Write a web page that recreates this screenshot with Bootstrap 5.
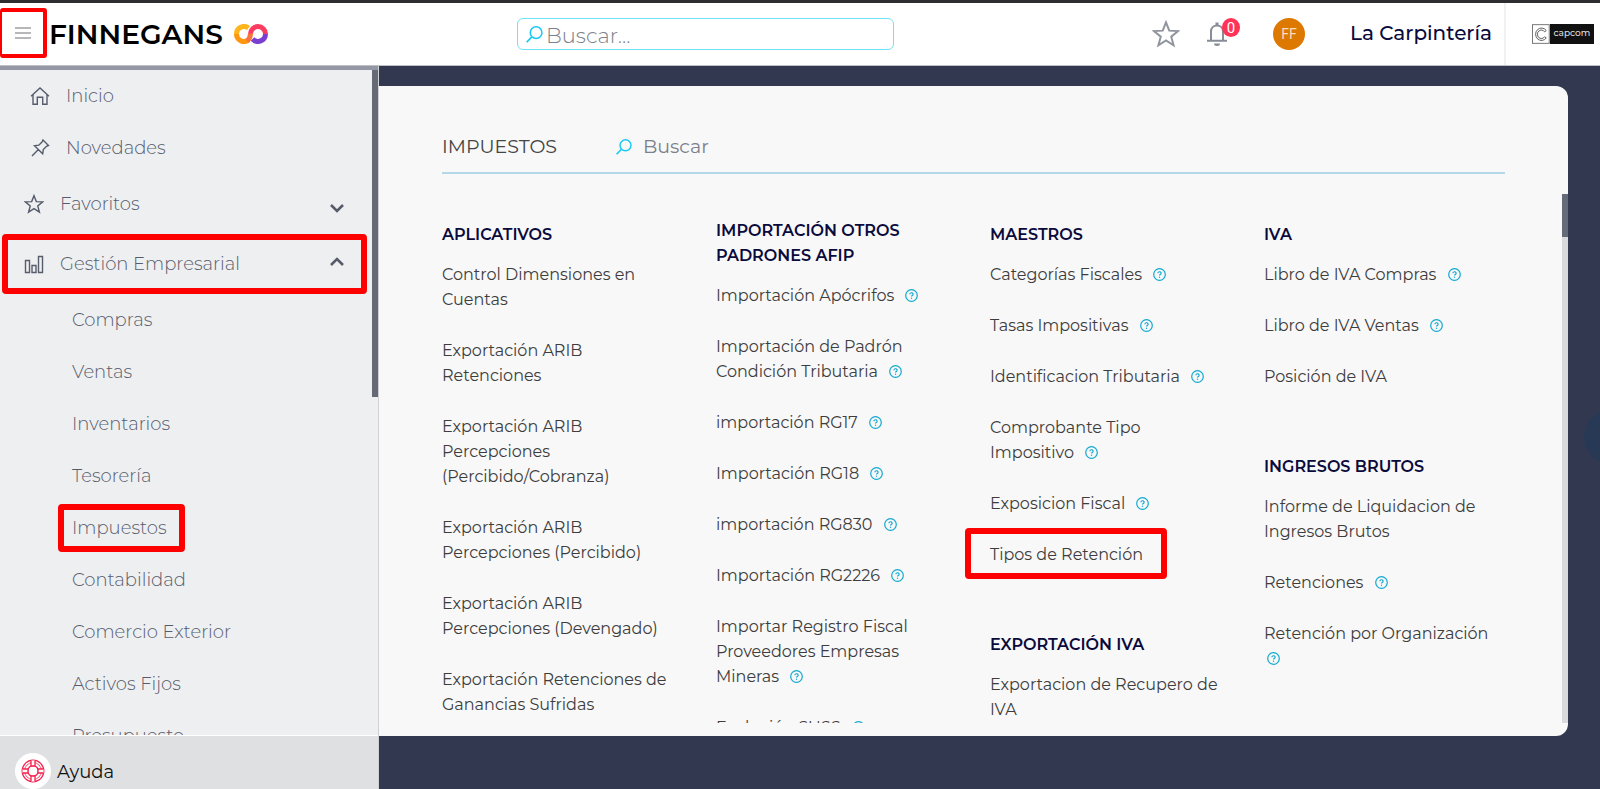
<!DOCTYPE html>
<html lang="es">
<head>
<meta charset="utf-8">
<meta name="viewport" content="width=device-width, initial-scale=1">
<title>Finnegans - Impuestos</title>
<link href="https://cdn.jsdelivr.net/npm/bootstrap@5.3.0/dist/css/bootstrap.min.css" rel="stylesheet">
<style>
  :root { --navy:#313850; --ink:#0a0a3c; --slate:#565c6c; --cyan:#14c8f5; --mark:#ff0000; }
  body { font-family: Montserrat, Inter, "Liberation Sans", sans-serif; background: var(--navy); color:#3d3d3d; }
  a { color: inherit; text-decoration: none; }
  .topbar { height: 66px; border-top: 3px solid #2e2e31; border-bottom: 1px solid #bfc0c6; background:#fff; }
  .burger { width: 47px; height: 50px; margin-top: 5px; border: 4px solid var(--mark); border-left-width: 2px; border-radius: 3px; background:none; padding: 0 0 0 13px; }
  .wordmark { font-size: 28px; font-weight: 600; line-height: 32px; color:#000; margin-left: 2px; width: 185px; }
  .search { width: 377px; height: 32px; margin-left: 249px; border: 1px solid #6fe3fa; border-radius: 6px; padding-left: 8px; }
  .search input, .finder input { border: 0; outline: 0; background: none; padding: 0; }
  .search input { font-size: 21px; font-weight: 300; line-height: 30px; padding-top: 3px; margin-left: 3px; width: 320px; }
  input::placeholder { color:#7c808b; opacity: 1; }
  .icon-btn { border: 0; background: none; padding: 0; line-height: 0; }
  .star-btn { color:#90949d; }
  .bell { margin: 0 12px 0 26px; }
  .count { position: absolute; left: 16px; top: -3px; width: 18px; height: 19px; border-radius: 50%; background:#ff3257; color:#fff; font-family: Roboto, sans-serif; font-size: 15px; line-height: 20px; text-align: center; }
  .avatar { width: 32px; height: 32px; border-radius: 50%; background:#dd7900; color:#f8dfc0; font-family: Roboto, sans-serif; font-size: 14px; line-height: 32px; text-align: center; margin-left: 31px; }
  .company { font-size: 20px; font-weight: 500; line-height: 28px; color: var(--ink); width: 154px; margin-left: 45px; padding-bottom: 2px; }
  .tenant { height: 62px; width: 96px; border-left: 2px solid #f1f1f4; padding: 0 6px 0 26px; }
  .tenant-name { background:#111; color:#ddd; font-size: 9px; font-weight: 500; line-height: 17px; height: 20px; width: 45px; text-align: center; }

  .shell { height: calc(100vh - 66px); min-height: 400px; }
  .side { width: 379px; background:#eeeff1; color: var(--slate); border-right: 1px solid #cfd1d5; font-size: 18px; font-weight: 300; }
  .side-scroll { border-top: 4px solid #9398a4; overflow: hidden; }
  .side-thumb { position: absolute; right: 0; top: 0; width: 6px; height: 327px; background:#656a76; }
  .side-row { height: 52px; display: flex; align-items: center; }
  .side-row.lead-row { padding-left: 30px; gap: 16px; }
  .side-row.group-row { padding: 0 34px 0 24px; gap: 16px; width: 100%; height: 60px; border: 0; background:none; color:inherit; text-align: left; font-weight: inherit; }
  .side-sub { padding-left: 72px; }
  .marked { position: relative; }
  .marked::after { content:""; position: absolute; border: 6px solid var(--mark); border-radius: 4px; pointer-events: none; }
  .mark-group::after { left: 2px; right: 11px; top: 0; bottom: 0; }
  .mark-sub::after { left: -14px; width: 127px; top: -11px; bottom: -10px; }
  .mark-item::after { left: -25px; width: 202px; top: -14px; bottom: -12px; }
  .helpbar { height: 54px; background:#dfe0e2; border-top: 1px solid #fff; padding-left: 15px; color:#111; font-weight: 400; }
  .help-disc { width: 36px; height: 36px; border-radius: 50%; background:#fff; margin-right: 6px; }
  .help-text { padding-bottom: 3px; }

  .panel { margin: 20px 32px 53px 0; background:#f8f8f8; border-radius: 0 12px 12px 0; overflow: hidden; }
  .panel-title { margin: 40px 63px 0; padding-bottom: 4px; height: 48px; border-bottom: 2px solid #b3d8e8; }
  .panel-title h1 { font-size: 19px; line-height: 24px; font-weight: 400; width: 174px; color:#444; }
  .finder input { font-size: 19px; line-height: 24px; margin-left: 11px; }
  .menu { margin: 20px 0 13px; padding: 24px 30px 0 63px; overflow: hidden; font-size: 16px; line-height: 25px; }
  .menu h2 { font-size: 16px; line-height: 25px; font-weight: 600; color: var(--ink); margin: 0; padding: 4px 0 15px; }
  .menu h2.tall { padding-top: 0; }
  .menu ul { list-style: none; margin: 0; padding: 0; }
  .menu li { margin-bottom: 26px; white-space: nowrap; }
  .menu section + section { padding-top: 35px; }
  .menu section:not(:last-child) { display: flow-root; }
  .tip { width: 13px; height: 13px; margin-left: 7px; vertical-align: -1px; }
  .tip.below { margin-left: 3px; }
  .track { position: absolute; right: 0; top: 108px; bottom: 13px; width: 6px; background:#d7d9dd; }
  .track::before { content:""; display: block; height: 43px; background:#656a78; }
  .bubble { position: absolute; right: -38px; top: 344px; width: 54px; height: 54px; border-radius: 50%; background:#283955; }
</style>
<script src="https://cdn.jsdelivr.net/npm/bootstrap@5.3.0/dist/js/bootstrap.bundle.min.js"></script>
</head>
<body class="overflow-hidden">
<svg class="d-none" xmlns="http://www.w3.org/2000/svg">
  <symbol id="q" viewBox="0 0 13 13"><circle cx="6.500" cy="6.500" r="5.800" fill="none" stroke="#14a9d0" stroke-width="1.200"/><path d="M4.900 5.300a1.600 1.500 0 1 1 2.300 1.300c-.5.300-.7.500-.7 1" fill="none" stroke="#14a9d0" stroke-width="1.200"/><circle cx="6.500" cy="9.200" r=".7" fill="#14a9d0"/></symbol>
  <symbol id="lens" viewBox="0 0 16 16"><circle cx="9.500" cy="6.300" r="5.500" fill="none" stroke="#14c8f5" stroke-width="1.400"/><path d="M5.500 10.300L.6 15.300" stroke="#14c8f5" stroke-width="1.600"/></symbol>
  <symbol id="star" viewBox="0 0 24 24"><path d="M12 2l2.800 7.100 7.600.4-5.900 4.800 2 7.400L12 17.500l-6.500 4.200 2-7.400-5.900-4.800 7.600-.4z" fill="none" stroke="currentColor" stroke-width="1.700"/></symbol>
</svg>

<header class="topbar d-flex align-items-center">
  <button class="burger align-self-start d-flex align-items-center" aria-label="Menú">
    <svg width="16" height="14" viewBox="0 0 16 14"><path d="M0 2h16M0 7h16M0 12h16" stroke="#a0a0a3" stroke-width="1.500"/></svg>
  </button>
  <a href="#" class="d-flex align-items-center">
    <span class="wordmark">FINNEGANS</span>
    <svg width="34" height="20" viewBox="0 0 34 20" fill="none" stroke-width="5">
      <path d="M2.500 10A7.500 7.500 0 0 1 14.500 4" stroke="#ffb51c"/>
      <path d="M2.500 10A7.500 7.500 0 0 0 14.500 16" stroke="#ff960f"/>
      <path d="M31.500 10A7.500 7.500 0 0 1 18.500 15" stroke="#7a3fd0"/>
      <path d="M16.500 10A7.500 7.500 0 0 1 31.500 10" stroke="#fb3b60"/>
      <path d="M13 17Q16.500 14 16.500 9.500" stroke="#fa7440"/>
    </svg>
  </a>
  <form class="search d-flex align-items-center" role="search">
    <svg width="17" height="17"><use href="#lens"/></svg>
    <input type="search" placeholder="Buscar..." aria-label="Buscar en el sistema">
  </form>
  <div class="d-flex align-items-center ms-auto">
    <button class="icon-btn star-btn" aria-label="Favoritos"><svg width="28" height="28"><use href="#star"/></svg></button>
    <button class="icon-btn position-relative bell" aria-label="Notificaciones">
      <svg width="24" height="26" viewBox="0 0 24 26"><path d="M5 19v-8.500C5 6.500 8 4.500 11 4.500s6 2 6 6V19M1 19.800h20" fill="none" stroke="#878c96" stroke-width="2"/><path d="M11 1.500v3" stroke="#878c96" stroke-width="3"/><path d="M8 22.500h6a3 2.500 0 0 1-6 0z" fill="#878c96"/></svg>
      <span class="count">0</span>
    </button>
    <span class="avatar">FF</span>
    <span class="company text-nowrap">La Carpintería</span>
    <div class="tenant d-flex align-items-center">
      <svg width="18" height="20" viewBox="0 0 18 20"><rect x=".5" y=".5" width="17" height="19" fill="#fff" stroke="#777"/><path d="M14.500 6.500A6 6.300 0 1 0 14.500 14L12.800 12.800A4 4.300 0 1 1 12.800 7.800z" fill="#fff" stroke="#333" stroke-width=".8"/></svg>
      <span class="tenant-name">capcom</span>
    </div>
  </div>
</header>

<div class="shell d-flex position-relative overflow-hidden">
  <aside class="side d-flex flex-column flex-shrink-0">
    <nav class="side-scroll flex-grow-1 position-relative" aria-label="Principal">
      <a href="#" class="side-row lead-row">
        <svg width="20" height="20" viewBox="0 0 20 20" fill="none" stroke="currentColor" stroke-width="1.400"><path d="M1 10.300L10 2l9 8.300M3 9v9.300h4.300v-7h5.400v7H17V9"/></svg>Inicio</a>
      <a href="#" class="side-row lead-row">
        <svg width="20" height="20" viewBox="0 0 20 20" fill="none" stroke="currentColor" stroke-width="1.400"><path d="M13 2l5.500 5.500-2 .8-3.200 3.200-.6 4.200L4.500 7.800l4.300-.6 3.200-3.200zM8.200 11.800L2 18"/></svg>Novedades</a>
      <button class="side-row group-row">
        <svg width="20" height="20"><use href="#star"/></svg><span class="flex-grow-1">Favoritos</span>
        <svg class="mt-2" width="14" height="10" viewBox="0 0 14 10"><path d="M1 2l6 6 6-6" fill="none" stroke="#555b69" stroke-width="2.600"/></svg></button>
      <button class="side-row group-row marked mark-group">
        <svg width="20" height="20" viewBox="0 0 20 20" fill="none" stroke="currentColor" stroke-width="1.400"><path d="M1.500 6.500h4v12h-4zM8 11.500h4v7H8zM14.500 2.500h4v16h-4z"/></svg><span class="flex-grow-1">Gestión Empresarial</span>
        <svg class="mb-1" width="14" height="10" viewBox="0 0 14 10"><path d="M1 8l6-6 6 6" fill="none" stroke="#555b69" stroke-width="2.600"/></svg></button>
      <a href="#" class="side-row side-sub">Compras</a>
      <a href="#" class="side-row side-sub">Ventas</a>
      <a href="#" class="side-row side-sub">Inventarios</a>
      <a href="#" class="side-row side-sub">Tesorería</a>
      <a href="#" class="side-row side-sub"><span class="marked mark-sub">Impuestos</span></a>
      <a href="#" class="side-row side-sub">Contabilidad</a>
      <a href="#" class="side-row side-sub">Comercio Exterior</a>
      <a href="#" class="side-row side-sub">Activos Fijos</a>
      <a href="#" class="side-row side-sub">Presupuesto</a>
      <span class="side-thumb"></span>
    </nav>
    <a href="#" class="helpbar d-flex align-items-end flex-shrink-0">
      <span class="help-disc d-flex align-items-center justify-content-center">
        <svg width="24" height="24" viewBox="0 0 24 24" fill="none" stroke="#f5204e" stroke-width="1.300"><circle cx="12" cy="12" r="10.800"/><circle cx="12" cy="12" r="8.500" stroke-width=".8"/><circle cx="12" cy="12" r="5.300"/><path fill="#fff" d="M10 1.500v5.500h4V1.500M10 22.500V17h4v5.500M1.500 10H7v4H1.500M22.500 10H17v4h5.500"/></svg>
      </span><span class="help-text">Ayuda</span></a>
  </aside>

  <main class="panel flex-grow-1 d-flex flex-column position-relative">
    <div class="panel-title d-flex align-items-center flex-shrink-0">
      <h1 class="mb-0">IMPUESTOS</h1>
      <label class="finder d-flex align-items-center"><svg width="16" height="16"><use href="#lens"/></svg><input type="search" placeholder="Buscar" aria-label="Buscar"></label>
    </div>
    <div class="menu row row-cols-4 g-0 flex-grow-1">
      <div class="col">
        <section><h2>APLICATIVOS</h2>
        <ul>
          <li><a href="#">Control Dimensiones en<br>Cuentas</a></li>
          <li><a href="#">Exportación ARIB<br>Retenciones</a></li>
          <li><a href="#">Exportación ARIB<br>Percepciones<br>(Percibido/Cobranza)</a></li>
          <li><a href="#">Exportación ARIB<br>Percepciones (Percibido)</a></li>
          <li><a href="#">Exportación ARIB<br>Percepciones (Devengado)</a></li>
          <li><a href="#">Exportación Retenciones de<br>Ganancias Sufridas</a></li>
        </ul></section>
      </div>
      <div class="col">
        <section><h2 class="tall">IMPORTACIÓN OTROS<br>PADRONES AFIP</h2>
        <ul>
          <li><a href="#">Importación Apócrifos</a> <svg class="tip"><use href="#q"/></svg></li>
          <li><a href="#">Importación de Padrón<br>Condición Tributaria</a> <svg class="tip"><use href="#q"/></svg></li>
          <li><a href="#">importación RG17</a> <svg class="tip"><use href="#q"/></svg></li>
          <li><a href="#">Importación RG18</a> <svg class="tip"><use href="#q"/></svg></li>
          <li><a href="#">importación RG830</a> <svg class="tip"><use href="#q"/></svg></li>
          <li><a href="#">Importación RG2226</a> <svg class="tip"><use href="#q"/></svg></li>
          <li><a href="#">Importar Registro Fiscal<br>Proveedores Empresas<br>Mineras</a> <svg class="tip"><use href="#q"/></svg></li>
          <li><a href="#">Evolución SUSS</a> <svg class="tip"><use href="#q"/></svg></li>
        </ul></section>
      </div>
      <div class="col">
        <section><h2>MAESTROS</h2>
        <ul>
          <li><a href="#">Categorías Fiscales</a> <svg class="tip"><use href="#q"/></svg></li>
          <li><a href="#">Tasas Impositivas</a> <svg class="tip"><use href="#q"/></svg></li>
          <li><a href="#">Identificacion Tributaria</a> <svg class="tip"><use href="#q"/></svg></li>
          <li><a href="#">Comprobante Tipo<br>Impositivo</a> <svg class="tip"><use href="#q"/></svg></li>
          <li><a href="#">Exposicion Fiscal</a> <svg class="tip"><use href="#q"/></svg></li>
          <li class="marked mark-item"><a href="#">Tipos de Retención</a></li>
        </ul></section>
        <section><h2>EXPORTACIÓN IVA</h2>
        <ul>
          <li><a href="#">Exportacion de Recupero de<br>IVA</a></li>
        </ul></section>
      </div>
      <div class="col">
        <section><h2>IVA</h2>
        <ul>
          <li><a href="#">Libro de IVA Compras</a> <svg class="tip"><use href="#q"/></svg></li>
          <li><a href="#">Libro de IVA Ventas</a> <svg class="tip"><use href="#q"/></svg></li>
          <li><a href="#">Posición de IVA</a></li>
        </ul></section>
        <section><h2>INGRESOS BRUTOS</h2>
        <ul>
          <li><a href="#">Informe de Liquidacion de<br>Ingresos Brutos</a></li>
          <li><a href="#">Retenciones</a> <svg class="tip"><use href="#q"/></svg></li>
          <li><a href="#">Retención por Organización</a><br><svg class="tip below"><use href="#q"/></svg></li>
        </ul></section>
      </div>
    </div>
    <span class="track"></span>
  </main>
  <span class="bubble"></span>
</div>
</body>
</html>
